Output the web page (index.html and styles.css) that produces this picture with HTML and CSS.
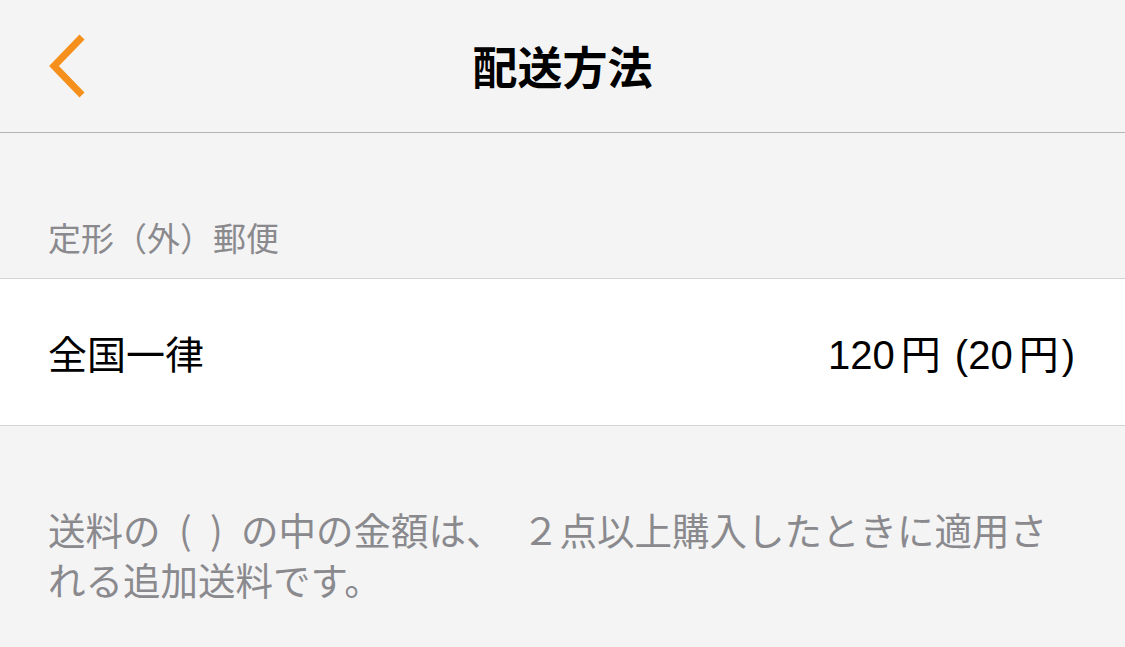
FILE: index.html
```html
<!DOCTYPE html>
<html lang="ja">
<head>
  <meta charset="UTF-8" />
  <meta name="viewport" content="width=device-width, initial-scale=1.0" />
  <title>配送方法</title>
  <link rel="stylesheet" href="styles.css">
</head>
<body>
  <header class="navbar">
    <a class="back" href="#">
      <svg width="40" height="64" viewBox="0 0 40 64">
        <path d="M35 3 L7 32 L35 61" fill="none" stroke="#f5901d" stroke-width="7" stroke-linejoin="miter"/>
      </svg>
    </a>
    <h1>配送方法</h1>
  </header>

  <div class="section-title">定形（外）郵便</div>

  <div class="row">
    <span class="label">全国一律</span>
    <span class="price">120<span class="yen">円</span> (20<span class="yen">円</span>)</span>
  </div>

  <p class="note">送料の ( ) の中の金額は、 ２点以上購入したときに適用される追加送料です。</p>
</body>
</html>
```

FILE: styles.css
```css
body {
  margin: 0;
  background: #f4f4f4;
  font-family: "Noto Sans CJK JP", "Noto Sans", sans-serif;
  color: #000;
}
.navbar {
  height: 132px;
  border-bottom: 1px solid #b4b4b4;
  display: flex;
  align-items: center;
  justify-content: center;
  position: relative;
}
.navbar h1 {
  margin: 0;
  font-size: 45px;
  font-weight: 700;
  margin-top: -2px;
}
.back {
  position: absolute;
  left: 47px;
  top: 34px;
  display: block;
  line-height: 0;
}
.section-title {
  height: 146px;
  box-sizing: border-box;
  display: flex;
  align-items: flex-end;
  padding: 0 48px 24px 48px;
  font-size: 33px;
  color: #8a8a8e;
  line-height: 1;
  border-bottom: 1px solid #d4d4d4;
}
.row {
  background: #fff;
  height: 146px;
  border-bottom: 1px solid #d4d4d4;
  display: flex;
  align-items: center;
  justify-content: space-between;
  padding: 0 50px 0 48px;
  font-size: 39px;
}
.price {
  font-family: "Liberation Sans", "Noto Sans CJK JP", sans-serif;
  font-size: 40px;
}
.price .yen {
  font-family: "Noto Sans CJK JP", sans-serif;
  margin: 0 3px 0 6px;
}
.note {
  margin: 0;
  padding: 78px 48px 0 48px;
  font-size: 37.5px;
  line-height: 50px;
  word-spacing: 10px;
  color: #8a8a8e;
}
```
